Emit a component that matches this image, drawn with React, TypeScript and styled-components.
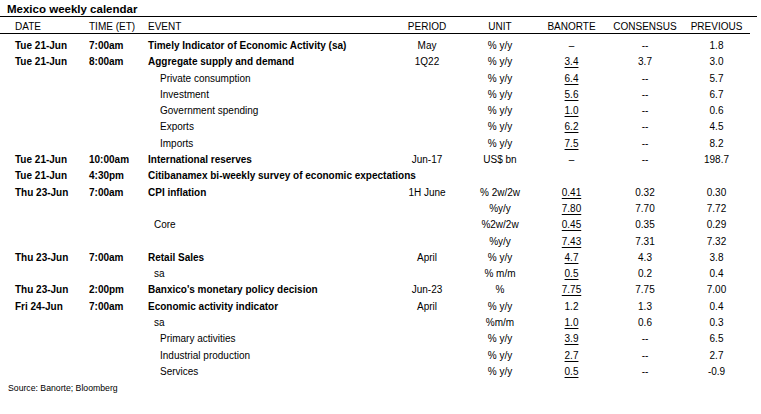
import * as React from "react"
import styled, { createGlobalStyle } from "styled-components"

const GlobalStyle = createGlobalStyle`
  body {
    margin: 0;
    background: #fff;
    font-family: "Liberation Sans", Arial, sans-serif;
    color: #000;
  }
`

const COLS = "88px 58px 244px 74px 72px 71px 76px 67px"

type Entry = {
  date?: string
  time?: string
  event?: string
  indent?: 0 | 1 | 2
  period?: string
  unit?: string
  banorte?: string
  mark?: boolean
  consensus?: string
  previous?: string
}

const rows: Entry[] = [
  { date: "Tue 21-Jun", time: "7:00am", event: "Timely Indicator of Economic Activity (sa)", period: "May", unit: "% y/y", banorte: "–", consensus: "--", previous: "1.8" },
  { date: "Tue 21-Jun", time: "8:00am", event: "Aggregate supply and demand", period: "1Q22", unit: "% y/y", banorte: "3.4", mark: true, consensus: "3.7", previous: "3.0" },
  { event: "Private consumption", indent: 2, unit: "% y/y", banorte: "6.4", mark: true, consensus: "--", previous: "5.7" },
  { event: "Investment", indent: 2, unit: "% y/y", banorte: "5.6", mark: true, consensus: "--", previous: "6.7" },
  { event: "Government spending", indent: 2, unit: "% y/y", banorte: "1.0", mark: true, consensus: "--", previous: "0.6" },
  { event: "Exports", indent: 2, unit: "% y/y", banorte: "6.2", mark: true, consensus: "--", previous: "4.5" },
  { event: "Imports", indent: 2, unit: "% y/y", banorte: "7.5", mark: true, consensus: "--", previous: "8.2" },
  { date: "Tue 21-Jun", time: "10:00am", event: "International reserves", period: "Jun-17", unit: "US$ bn", banorte: "–", consensus: "--", previous: "198.7" },
  { date: "Tue 21-Jun", time: "4:30pm", event: "Citibanamex bi-weekly survey of economic expectations" },
  { date: "Thu 23-Jun", time: "7:00am", event: "CPI inflation", period: "1H June", unit: "% 2w/2w", banorte: "0.41", mark: true, consensus: "0.32", previous: "0.30" },
  { unit: "%y/y", banorte: "7.80", mark: true, consensus: "7.70", previous: "7.72" },
  { event: "Core", indent: 1, unit: "%2w/2w", banorte: "0.45", mark: true, consensus: "0.35", previous: "0.29" },
  { unit: "%y/y", banorte: "7.43", mark: true, consensus: "7.31", previous: "7.32" },
  { date: "Thu 23-Jun", time: "7:00am", event: "Retail Sales", period: "April", unit: "% y/y", banorte: "4.7", mark: true, consensus: "4.3", previous: "3.8" },
  { event: "sa", indent: 1, unit: "% m/m", banorte: "0.5", mark: true, consensus: "0.2", previous: "0.4" },
  { date: "Thu 23-Jun", time: "2:00pm", event: "Banxico's monetary policy decision", period: "Jun-23", unit: "%", banorte: "7.75", mark: true, consensus: "7.75", previous: "7.00" },
  { date: "Fri 24-Jun", time: "7:00am", event: "Economic activity indicator", period: "April", unit: "% y/y", banorte: "1.2", consensus: "1.3", previous: "0.4" },
  { event: "sa", indent: 1, unit: "%m/m", banorte: "1.0", mark: true, consensus: "0.6", previous: "0.3" },
  { event: "Primary activities", indent: 2, unit: "% y/y", banorte: "3.9", mark: true, consensus: "--", previous: "6.5" },
  { event: "Industrial production", indent: 2, unit: "% y/y", banorte: "2.7", mark: true, consensus: "--", previous: "2.7" },
  { event: "Services", indent: 2, unit: "% y/y", banorte: "0.5", mark: true, consensus: "--", previous: "-0.9" },
]

const Page = styled.div`
  width: 761px;
  height: 414px;
  overflow: hidden;
`

const Title = styled.div`
  width: 750px;
  height: 15px;
  padding: 1px 0 0 7px;
  line-height: 16px;
  box-sizing: content-box;
  font-size: 11.5px;
  font-weight: 700;
  border-bottom: 1px solid #000;
`

const Head = styled.div`
  display: grid;
  grid-template-columns: ${COLS};
  width: 750px;
  height: 14px;
  padding-top: 2px;
  line-height: 15px;
  font-size: 10px;
  font-weight: 700;
  border-bottom: 1px solid #000;
`

const Body = styled.div`
  padding-top: 4px;
`

const Row = styled.div`
  display: grid;
  grid-template-columns: ${COLS};
  height: 16.3px;
  line-height: 16.3px;
  font-size: 10px;
  white-space: nowrap;
`

const Cell = styled.div<{ $align?: "left" | "center"; $pad?: number; $bold?: boolean }>`
  min-width: 0;
  overflow: visible;
  text-align: ${(p) => p.$align ?? "center"};
  padding-left: ${(p) => p.$pad ?? 0}px;
  font-weight: ${(p) => (p.$bold ? 700 : 400)};
`

const Mark = styled.span`
  text-decoration: underline;
  text-decoration-thickness: 1px;
  text-underline-offset: 2px;
`

const Source = styled.div`
  height: 16px;
  line-height: 16px;
  padding-left: 8px;
  font-size: 8.7px;
`

const EVENT_PAD = [2, 8, 14]

const App: React.FC = () => (
  <Page>
    <GlobalStyle />
    <Title>Mexico weekly calendar</Title>
    <Head>
      <Cell $align="left" $pad={15}>DATE</Cell>
      <Cell $align="left" $pad={1}>TIME (ET)</Cell>
      <Cell $align="left" $pad={2}>EVENT</Cell>
      <Cell>PERIOD</Cell>
      <Cell>UNIT</Cell>
      <Cell>BANORTE</Cell>
      <Cell>CONSENSUS</Cell>
      <Cell>PREVIOUS</Cell>
    </Head>
    <Body>
      {rows.map((r, i) => (
        <Row key={i}>
          <Cell $align="left" $pad={15} $bold>{r.date}</Cell>
          <Cell $align="left" $pad={1} $bold>{r.time}</Cell>
          <Cell $align="left" $pad={EVENT_PAD[r.indent ?? 0]} $bold={!!r.date}>
            {r.event}
          </Cell>
          <Cell>{r.period}</Cell>
          <Cell>{r.unit}</Cell>
          <Cell>{r.mark ? <Mark>{r.banorte}</Mark> : r.banorte}</Cell>
          <Cell>{r.consensus}</Cell>
          <Cell>{r.previous}</Cell>
        </Row>
      ))}
    </Body>
    <Source>Source: Banorte; Bloomberg</Source>
  </Page>
)

export default App
